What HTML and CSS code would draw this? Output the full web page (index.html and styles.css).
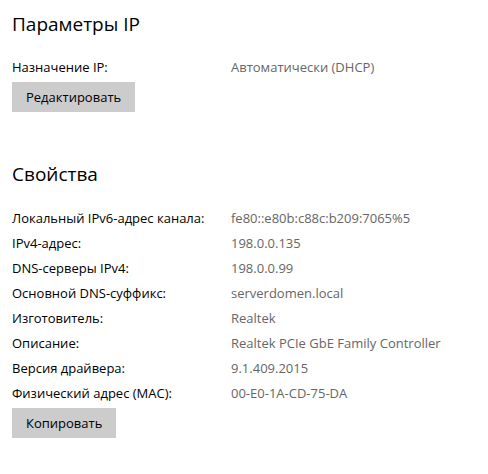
FILE: index.html
```html
<!DOCTYPE html>
<html lang="ru">
<head>
    <meta charset="UTF-8">
    <meta name="viewport" content="width=device-width, initial-scale=1.0">
    <title>Параметры IP</title>
    <link rel="stylesheet" href="styles.css">
</head>
<body>
    <div class="page">
        <section class="block">
            <h2 class="title">Параметры IP</h2>
            <div class="props">
                <div class="label">Назначение IP:</div>
                <div class="value">Автоматически (DHCP)</div>
            </div>
            <button class="button">Редактировать</button>
        </section>

        <section class="block block-props">
            <h2 class="title">Свойства</h2>
            <div class="props props-list">
                <div class="label">Локальный IPv6-адрес канала:</div>
                <div class="value">fe80::e80b:c88c:b209:7065%5</div>
                <div class="label">IPv4-адрес:</div>
                <div class="value">198.0.0.135</div>
                <div class="label">DNS-серверы IPv4:</div>
                <div class="value">198.0.0.99</div>
                <div class="label">Основной DNS-суффикс:</div>
                <div class="value">serverdomen.local</div>
                <div class="label">Изготовитель:</div>
                <div class="value">Realtek</div>
                <div class="label">Описание:</div>
                <div class="value">Realtek PCIe GbE Family Controller</div>
                <div class="label">Версия драйвера:</div>
                <div class="value">9.1.409.2015</div>
                <div class="label">Физический адрес (MAC):</div>
                <div class="value">00-E0-1A-CD-75-DA</div>
            </div>
            <button class="button">Копировать</button>
        </section>
    </div>
</body>
</html>
```

FILE: styles.css
```css
body {
    margin: 0;
    background: #fff;
    color: #000;
    font-family: "Open Sans", "Noto Sans", sans-serif;
    font-size: 13px;
}
.page {
    padding: 10px 12px 0 12px;
}
.block {
    margin: 0;
}
.block-props {
    margin-top: 48px;
}
.title {
    margin: 0;
    font-size: 19px;
    font-weight: normal;
    line-height: 28px;
}
.props {
    display: grid;
    grid-template-columns: 219px auto;
    grid-auto-rows: 25px;
    align-items: center;
    margin-top: 16px;
}
.props-list {
    margin-top: 17px;
}
.label {
    color: #000;
}
.value {
    color: #666;
}
.button {
    display: block;
    margin-top: 3px;
    height: 30px;
    padding: 0 14px;
    border: none;
    background: #ccc;
    color: #000;
    font-family: inherit;
    font-size: 13px;
}
```
